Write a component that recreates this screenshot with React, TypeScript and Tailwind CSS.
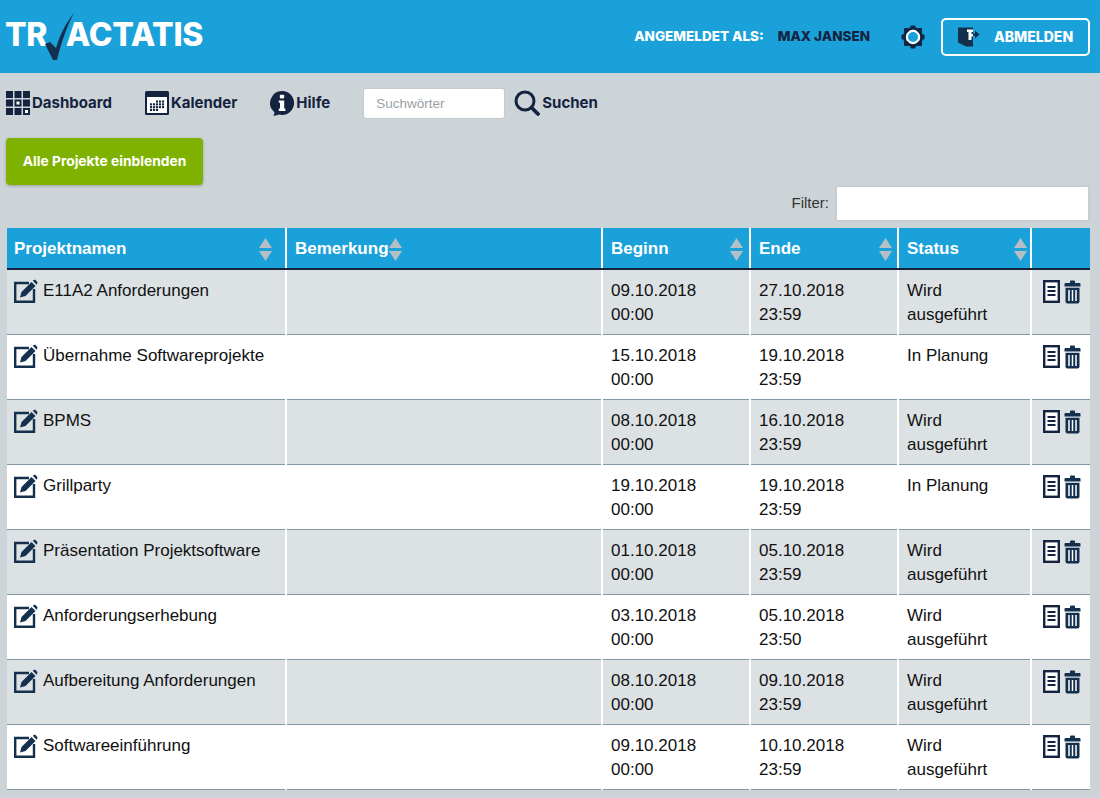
import React from "react";

const projects = [
  { name: "E11A2 Anforderungen", start: "09.10.2018", startTime: "00:00", end: "27.10.2018", endTime: "23:59", status: "Wird ausgeführt" },
  { name: "Übernahme Softwareprojekte", start: "15.10.2018", startTime: "00:00", end: "19.10.2018", endTime: "23:59", status: "In Planung" },
  { name: "BPMS", start: "08.10.2018", startTime: "00:00", end: "16.10.2018", endTime: "23:59", status: "Wird ausgeführt" },
  { name: "Grillparty", start: "19.10.2018", startTime: "00:00", end: "19.10.2018", endTime: "23:59", status: "In Planung" },
  { name: "Präsentation Projektsoftware", start: "01.10.2018", startTime: "00:00", end: "05.10.2018", endTime: "23:59", status: "Wird ausgeführt" },
  { name: "Anforderungserhebung", start: "03.10.2018", startTime: "00:00", end: "05.10.2018", endTime: "23:50", status: "Wird ausgeführt" },
  { name: "Aufbereitung Anforderungen", start: "08.10.2018", startTime: "00:00", end: "09.10.2018", endTime: "23:59", status: "Wird ausgeführt" },
  { name: "Softwareeinführung", start: "09.10.2018", startTime: "00:00", end: "10.10.2018", endTime: "23:59", status: "Wird ausgeführt" },
];

const navy = "#14233f";

function Logo() {
  return (
    <div className="relative h-[73px] w-[210px] shrink-0">
      <div className="absolute left-[5px] top-[16px] flex whitespace-nowrap font-['Inter',sans-serif] text-[32px] leading-[38px] font-extrabold tracking-[-0.3px] text-white">
        <span>TR</span>
        <span className="ml-[18.6px]">ACTATIS</span>
      </div>
      <svg className="absolute left-[44px] top-[12px]" width="32" height="50" viewBox="0 0 32 50">
        <path d="M30 1 C 22 16 17 32 13 48 L 9 48 L 1 32 L 6 30 L 12 36 C 16 22 22 11 30 1 Z" fill="#14304f" />
      </svg>
    </div>
  );
}

function Gear() {
  return (
    <svg width="24" height="24" viewBox="0 0 24 24">
      <circle cx="12" cy="12" r="8.6" fill="none" stroke={navy} strokeWidth="2.8" />
      <circle cx="12" cy="12" r="6.1" fill="none" stroke="#ffffff" strokeWidth="2.2" />
      <g fill={navy}>
        <rect x="9.5" y="0.5" width="5" height="3.5" rx="1" />
        <rect x="9.5" y="20" width="5" height="3.5" rx="1" />
        <rect x="0.5" y="9.5" width="3.5" height="5" rx="1" />
        <rect x="20" y="9.5" width="3.5" height="5" rx="1" />
        <rect x="3" y="3" width="4.4" height="4.4" rx="1" />
        <rect x="16.6" y="3" width="4.4" height="4.4" rx="1" />
        <rect x="3" y="16.6" width="4.4" height="4.4" rx="1" />
        <rect x="16.6" y="16.6" width="4.4" height="4.4" rx="1" />
      </g>
    </svg>
  );
}

function LogoutIcon() {
  return (
    <svg width="22" height="20" viewBox="0 0 22 20">
      <path d="M0 0.5 H15 V19.5 L8 19.5 L0 15.5 Z" fill="#14304f" />
      <path d="M9 2.5 H15 V5 H13.5 V7 H15 V9.5 H13.5 V13 H10.5 V5 H9 Z" fill="#ffffff" />
      <path d="M15 6.5 H17 V3.5 L21.5 7.5 L17 11.5 V8.8 H15 Z" fill="#14304f" />
    </svg>
  );
}

function GridIcon() {
  const cells = [0, 1, 2, 3, 4, 5, 6, 7, 8];
  return (
    <svg width="24" height="24" viewBox="0 0 24 24">
      {cells.map((i) => {
        const x = (i % 3) * 8.5;
        const y = Math.floor(i / 3) * 8.5;
        const hollow = i === 4 || i === 8;
        return (
          <g key={i}>
            <rect x={x} y={y} width="7" height="7" fill={navy} />
            {hollow && <rect x={x + 2} y={y + 2} width="3" height="3" fill="#ffffff" />}
          </g>
        );
      })}
    </svg>
  );
}

function CalendarIcon() {
  const dots: number[][] = [];
  for (let r = 0; r < 4; r++) {
    for (let c = 0; c < 5; c++) {
      if ((r === 0 && c < 2) || (r === 3 && c > 2)) continue;
      dots.push([5 + c * 3, 9.5 + r * 2.8]);
    }
  }
  return (
    <svg width="24" height="24" viewBox="0 0 24 24">
      <rect x="0" y="0" width="24" height="24" rx="1.5" fill={navy} />
      <rect x="2" y="6" width="20" height="16" fill="#ffffff" />
      {dots.map(([x, y]) => (
        <rect key={`${x}-${y}`} x={x} y={y} width="2.1" height="2.1" fill={navy} />
      ))}
    </svg>
  );
}

function InfoIcon() {
  return (
    <svg width="24" height="25" viewBox="0 0 24 25">
      <path d="M12 0 A12 12 0 1 1 9 23.6 C 7 24.6 5 24.8 3.2 24.6 C 4.2 23.6 4.6 22.4 4.4 21.2 A12 12 0 0 1 12 0 Z" fill={navy} />
      <rect x="9.8" y="3.8" width="4.4" height="3.8" rx="1" fill="#ffffff" />
      <path d="M8.8 9.4 H14.2 V17.6 H15.4 V20 H8.8 V17.6 H10 V11.8 H8.8 Z" fill="#ffffff" />
    </svg>
  );
}

function SearchIcon() {
  return (
    <svg width="26" height="26" viewBox="0 0 26 26">
      <circle cx="11" cy="11" r="9" fill="none" stroke={navy} strokeWidth="3" />
      <path d="M17.5 17.5 L24 24" stroke={navy} strokeWidth="3.8" strokeLinecap="round" />
    </svg>
  );
}

function EditIcon() {
  return (
    <svg width="24" height="24" viewBox="0 0 24 24" className="shrink-0">
      <path d="M15 4 H1.2 V22.8 H20 V10" fill="none" stroke="#14304f" strokeWidth="2.4" />
      <path d="M6 18.5 L7.5 13 L17.5 3 L21.5 7 L11.5 17 Z" fill="#14304f" />
      <path d="M18.8 1.8 Q20 0.5 21.3 0.8 L23.4 3 Q23.6 4.4 22.6 5.7 Z" fill="#14304f" />
    </svg>
  );
}

function DocIcon() {
  return (
    <svg width="17" height="23" viewBox="0 0 17 23">
      <rect x="1.2" y="1.2" width="14.6" height="20.6" fill="#ffffff" stroke="#14233f" strokeWidth="2.4" />
      <path d="M4.5 7 H12.5 M4.5 11 H12.5 M4.5 15 H12.5" stroke="#14233f" strokeWidth="2" />
    </svg>
  );
}

function TrashIcon() {
  return (
    <svg width="17" height="24" viewBox="0 0 17 24">
      <path d="M6 3 V1.5 Q6 0.5 7 0.5 H10 Q11 0.5 11 1.5 V3 H15.5 Q16.5 3 16.5 4 V6.5 H0.5 V4 Q0.5 3 1.5 3 Z" fill="#14304f" />
      <path d="M1.5 7.8 H15.5 V21.5 Q15.5 23.5 13.5 23.5 H3.5 Q1.5 23.5 1.5 21.5 Z" fill="#14304f" />
      <path d="M5 10 V21 M8.5 10 V21 M12 10 V21" stroke="#ffffff" strokeWidth="1.5" />
    </svg>
  );
}

function SortArrows() {
  return (
    <svg width="13" height="23" viewBox="0 0 13 23" className="shrink-0">
      <path d="M6.5 0 L13 10 H0 Z" fill="#b4c0c6" />
      <path d="M0 13 H13 L6.5 23 Z" fill="#b4c0c6" />
    </svg>
  );
}

function NavItem({ icon, label, className }: { icon: React.ReactNode; label: string; className?: string }) {
  return (
    <a className={`flex items-center gap-[2px] text-[15px] font-bold text-[#14233f] ${className ?? ""}`}>
      {icon}
      <span>{label}</span>
    </a>
  );
}

function HeadCell({ label, width, pad, tight }: { label: string; width: number; pad: string; tight?: boolean }) {
  return (
    <th style={{ width }} className={`h-[41px] border-r-2 border-b-2 border-r-white border-b-[#14233f] bg-[#1ba1da] pt-[2px] text-left align-middle text-[17px] font-bold text-white ${pad}`}>
      <div className={`flex items-center ${tight ? "" : "justify-between"}`}>
        <span>{label}</span>
        <SortArrows />
      </div>
    </th>
  );
}

export default function App() {
  return (
    <div className="h-[798px] w-[1100px] overflow-hidden bg-[#cdd4d8] font-['Liberation_Sans',Arial,sans-serif]">
      <header className="flex h-[73px] items-center bg-[#1ba1da] pr-[10px] font-['Inter',sans-serif]">
        <Logo />
        <div className="ml-auto flex items-center">
          <span className="text-[13.5px] font-extrabold text-white">ANGEMELDET ALS:</span>
          <span className="ml-[14px] text-[13.5px] font-extrabold text-[#14233f]">MAX JANSEN</span>
          <span className="ml-[31px] flex"><Gear /></span>
          <button className="ml-[16px] flex h-[38px] w-[149px] items-center rounded-[5px] border-2 border-white pl-[15px] text-[14px] font-extrabold text-white">
            <LogoutIcon />
            <span className="ml-[14px]">ABMELDEN</span>
          </button>
        </div>
      </header>

      <nav className="flex h-[60px] items-center pl-[6px] font-['Inter',sans-serif]">
        <NavItem icon={<GridIcon />} label="Dashboard" />
        <NavItem icon={<CalendarIcon />} label="Kalender" className="ml-[33px]" />
        <NavItem icon={<InfoIcon />} label="Hilfe" className="ml-[33px]" />
        <input
          placeholder="Suchwörter"
          className="ml-[33px] h-[31px] w-[142px] rounded-[3px] border border-[#c3cbd0] bg-white px-3 font-['Liberation_Sans',Arial,sans-serif] text-[13.5px] outline-none placeholder:text-[#9a9fa6]"
        />
        <NavItem icon={<SearchIcon />} label="Suchen" className="ml-[9px]" />
      </nav>

      <div className="px-[6px] pt-[5px]">
        <button className="h-[47px] w-[197px] rounded-[4px] bg-[#7fb200] font-['Inter',sans-serif] text-[13.8px] font-bold text-white shadow-[0_1px_3px_rgba(0,0,0,0.25)]">
          Alle Projekte einblenden
        </button>
      </div>

      <div className="flex items-center justify-end pr-[10px]">
        <label className="mr-[6px] text-[15px] text-[#333]">Filter:</label>
        <input className="h-[37px] w-[255px] rounded-[3px] border-2 border-[#c6ced3] bg-white outline-none" />
      </div>

      <div className="pl-[7px] pt-[6px]">
        <table className="w-[1083px] table-fixed border-collapse text-[17px] leading-[24.5px] text-[#111]">
          <thead>
            <tr>
              <HeadCell label="Projektnamen" width={279} pad="pl-[7px] pr-[13px]" />
              <HeadCell label="Bemerkung" width={316} pad="pl-2 pr-2" tight />
              <HeadCell label="Beginn" width={148} pad="pl-2 pr-[6px]" />
              <HeadCell label="Ende" width={148} pad="pl-2 pr-[5px]" />
              <HeadCell label="Status" width={133} pad="pl-2 pr-[3px]" />
              <th className="border-b-2 border-b-[#14233f] bg-[#1ba1da]" />
            </tr>
          </thead>
          <tbody>
            {projects.map((p, i) => (
              <tr key={p.name} className={`h-[65px] border-b border-b-[#8596a3] ${i % 2 === 0 ? "bg-[#dce1e4]" : "bg-white"}`}>
                <td className="whitespace-nowrap border-r-2 border-white pl-[7px] pr-2 pb-[6px] pt-[9px] align-top">
                  <div className="flex items-start gap-[5px]">
                    <EditIcon />
                    <span>{p.name}</span>
                  </div>
                </td>
                <td className="border-r-2 border-white" />
                <td className="border-r-2 border-white px-2 pt-[8.75px] pb-[6px] align-top">
                  {p.start}
                  <br />
                  {p.startTime}
                </td>
                <td className="border-r-2 border-white px-2 pt-[8.75px] pb-[6px] align-top">
                  {p.end}
                  <br />
                  {p.endTime}
                </td>
                <td className="border-r-2 border-white px-2 pt-[8.75px] pb-[6px] align-top">{p.status}</td>
                <td className="px-2 pt-[10px] align-top">
                  <div className="flex items-start gap-[4px] pl-[3px]">
                    <DocIcon />
                    <TrashIcon />
                  </div>
                </td>
              </tr>
            ))}
          </tbody>
        </table>
      </div>
    </div>
  );
}
